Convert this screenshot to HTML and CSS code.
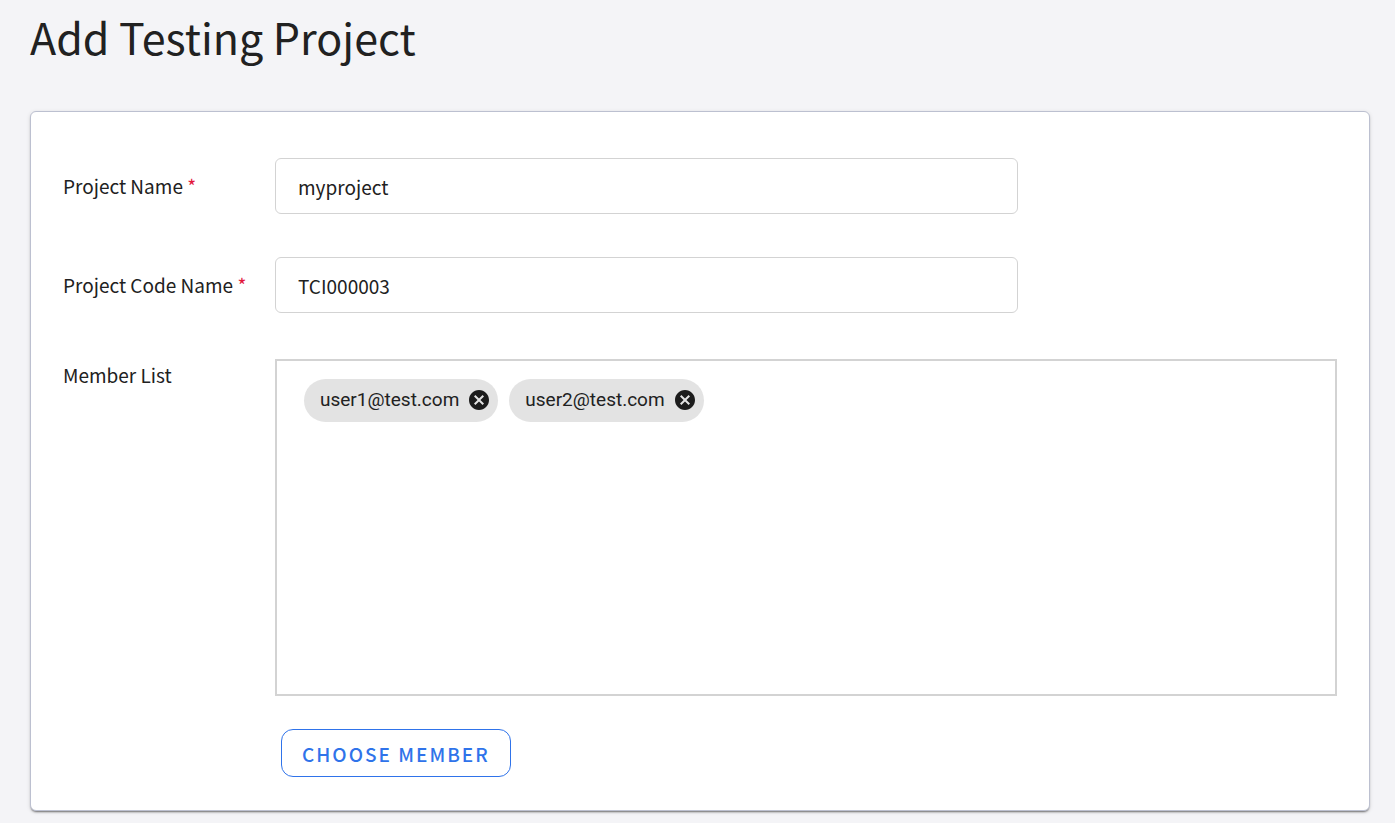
FILE: index.html
```html
<!DOCTYPE html>
<html lang="en">
<head>
<meta charset="UTF-8">
<meta name="viewport" content="width=device-width, initial-scale=1.0">
<title>Add Testing Project</title>
<link rel="stylesheet" href="styles.css">
</head>
<body>
<main class="page">
  <h1 class="page-title">Add Testing Project</h1>
  <form class="card">
    <div class="form-row">
      <label class="form-label" for="project-name">Project Name <span class="required">*</span></label>
      <input class="form-input" id="project-name" type="text" value="myproject" required>
    </div>
    <div class="form-row">
      <label class="form-label" for="project-code">Project Code Name <span class="required">*</span></label>
      <input class="form-input" id="project-code" type="text" value="TCI000003" required>
    </div>
    <div class="form-row form-row-top">
      <span class="form-label" id="member-label">Member List</span>
      <div class="member-field">
        <div class="member-list" role="group" aria-labelledby="member-label">
          <div class="chip">
            <span>user1@test.com</span>
            <button type="button" class="chip-remove" aria-label="Remove user1@test.com">
              <svg viewBox="2 2 20 20" fill="currentColor" aria-hidden="true">
                <path d="M12 2C6.47 2 2 6.47 2 12s4.47 10 10 10 10-4.47 10-10S17.53 2 12 2zm5 13.59L15.59 17 12 13.41 8.41 17 7 15.59 10.59 12 7 8.41 8.41 7 12 10.59 15.59 7 17 8.41 13.41 12 17 15.59z"></path>
              </svg>
            </button>
          </div>
          <div class="chip">
            <span>user2@test.com</span>
            <button type="button" class="chip-remove" aria-label="Remove user2@test.com">
              <svg viewBox="2 2 20 20" fill="currentColor" aria-hidden="true">
                <path d="M12 2C6.47 2 2 6.47 2 12s4.47 10 10 10 10-4.47 10-10S17.53 2 12 2zm5 13.59L15.59 17 12 13.41 8.41 17 7 15.59 10.59 12 7 8.41 8.41 7 12 10.59 15.59 7 17 8.41 13.41 12 17 15.59z"></path>
              </svg>
            </button>
          </div>
        </div>
        <button type="button" class="choose-button">CHOOSE MEMBER</button>
      </div>
    </div>
  </form>
</main>
</body>
</html>
```
FILE: styles.css
```css
* {
  box-sizing: border-box;
}

body {
  margin: 0;
  background-color: #f4f4f7;
  color: #212121;
  font-family: "Noto Sans CJK TC", "Noto Sans", sans-serif;
  font-size: 19px;
  line-height: 32px;
}

.page {
  padding: 6px 25px 12px 30px;
}

.page-title {
  margin: 0 0 45px;
  font-size: 43px;
  font-weight: 400;
  line-height: 60px;
}

.card {
  padding: 46px 32px 33px;
  border: 1px solid #bcc0d0;
  border-radius: 6px;
  background-color: #fff;
  box-shadow: 0 2px 2px -1px rgba(0, 0, 0, 0.5), 0 1px 4px rgba(0, 0, 0, 0.12);
}

.form-row {
  display: grid;
  grid-template-columns: 212px 1fr;
  align-items: center;
  margin-bottom: 43px;
}

.form-row-top {
  align-items: start;
  margin: 46px 0 0;
}

.required {
  color: #e2173c;
}

.form-input {
  width: 70%;
  height: 56px;
  padding: 0 22px;
  border: 1px solid #d3d3d3;
  border-radius: 6px;
  background-color: #fff;
  color: inherit;
  font: inherit;
}

.member-list {
  display: flex;
  flex-wrap: wrap;
  align-content: flex-start;
  gap: 11px;
  min-height: 337px;
  padding: 18px 27px;
  border: 2px solid #d3d3d3;
}

.chip {
  display: flex;
  align-items: center;
  gap: 10px;
  height: 43px;
  padding: 0 9px 2px 16px;
  border-radius: 22px;
  background-color: #e3e3e3;
  font-family: Roboto, sans-serif;
  font-size: 19px;
}

.chip-remove {
  width: 20px;
  height: 20px;
  padding: 0;
  border: none;
  background: none;
  color: #1c1c1c;
  cursor: pointer;
}

.chip-remove svg {
  display: block;
}

.choose-button {
  height: 48px;
  margin: 33px 0 0 6px;
  padding: 2px 20px 0;
  border: 1px solid #2f73ea;
  border-radius: 12px;
  background-color: #fff;
  color: #2f73ea;
  font: inherit;
  font-weight: 500;
  letter-spacing: 2px;
  cursor: pointer;
}
```
